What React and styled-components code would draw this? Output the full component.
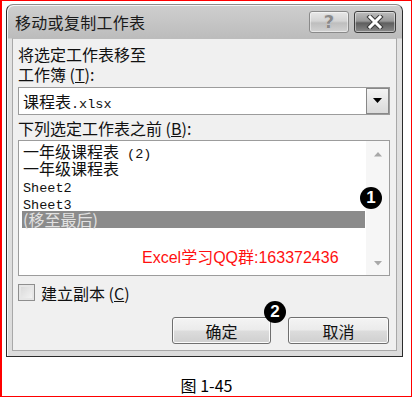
import React from 'react';
import styled, { createGlobalStyle } from 'styled-components';

const Global = createGlobalStyle`
  html, body {
    margin: 0;
    padding: 0;
    background: #fff;
  }
  * { box-sizing: border-box; }
`;

// page frame
const Page = styled.div`
  width: 412px;
  height: 397px;
  border: 1px solid #ff0000;
  border-left-width: 2px;
  padding: 3px 0 0 4px;
  display: flex;
  flex-direction: column;
  font-family: "Noto Sans CJK SC", "Liberation Sans", sans-serif;
`;

const Dialog = styled.div`
  width: 397px;
  display: flex;
  flex-direction: column;
  border: 1px solid #2b2b2b;
  border-top-color: #8c8c8c;
  border-radius: 7px 7px 0 0;
  background: linear-gradient(to bottom, #cfcfcf 0px, #bcbcbc 33px, #e2e2e2 34px, #dcdcdc 100%);
  box-shadow: inset 1px 1px 0 #f4f4f4;
`;

const TitleBar = styled.div`
  height: 33px;
  display: flex;
  align-items: center;
  padding: 0 6px 0 8px;
`;

const Title = styled.div`
  flex: 1;
  font-size: 16px;
  color: #1a1a1a;
  letter-spacing: 0.3px;
`;

const CaptionButton = styled.div`
  width: ${({ $w }) => $w}px;
  height: 22px;
  margin-left: 5px;
  border: 1px solid ${({ $dark }) => ($dark ? '#3e3e3e' : '#8a8a8a')};
  border-radius: 3px;
  display: flex;
  align-items: center;
  justify-content: center;
  background: ${({ $dark }) =>
    $dark
      ? 'linear-gradient(to bottom, #bdbdbd 0%, #9a9a9a 45%, #5e5e5e 55%, #8a8a8a 100%)'
      : 'linear-gradient(to bottom, #e8e8e8 0%, #d4d4d4 45%, #bebebe 55%, #d2d2d2 100%)'};
  box-shadow: inset 0 0 0 1px rgba(255, 255, 255, 0.45);
`;

const HelpGlyph = styled.span`
  font-family: "DejaVu Sans", sans-serif;
  font-weight: bold;
  font-size: 18px;
  line-height: 1;
  color: #8a8a8a;
  text-shadow: 0 0 1px #fff, 0 0 1px #fff, 0 0 1px #555;
`;

const Body = styled.div`
  margin: 0 5px 5px 5px;
  border: 1px solid #a8a8a8;
  border-top-color: #bcbcbc;
  background: #f0f0f0;
  padding: 5px 6px 6px 5px;
  display: flex;
  flex-direction: column;
  position: relative;
`;

const Label = styled.div`
  font-size: 16px;
  line-height: 20px;
  height: 20px;
  color: #111;
  margin-top: ${({ $mt }) => $mt || 0}px;
  white-space: nowrap;
`;

const Mono = styled.span`
  font-family: "Liberation Mono", monospace;
  font-size: 13.5px;
  white-space: pre;
`;

const Combo = styled.div`
  margin-top: 3px;
  height: 28px;
  border: 1px solid #9c9c9c;
  background: #fff;
  display: flex;
  align-items: stretch;
`;

const ComboText = styled.div`
  flex: 1;
  padding-left: 4px;
  font-size: 16px;
  line-height: 26px;
  color: #111;
`;

const DropButton = styled.div`
  width: 23px;
  border: 1px solid #888;
  background: linear-gradient(to bottom, #f4f4f4, #dadada);
  display: flex;
  align-items: center;
  justify-content: center;
`;

const List = styled.div`
  margin-top: 2px;
  height: 136px;
  border: 1px solid #9c9c9c;
  background: #fff;
  display: flex;
  position: relative;
`;

const Items = styled.div`
  flex: 1;
  padding: 2px 1px 0 3px;
`;

const Item = styled.div`
  height: 17px;
  line-height: 17px;
  font-size: 16px;
  padding-left: 1px;
  white-space: nowrap;
  color: ${({ $selected }) => ($selected ? '#e2e2e2' : '#111')};
  background: ${({ $selected }) => ($selected ? '#8b8b8b' : 'transparent')};
`;

const ScrollBar = styled.div`
  width: 23px;
  background: #f6f6f6;
  display: flex;
  flex-direction: column;
  justify-content: space-between;
  align-items: center;
  padding: 11px 0 9px;
`;

const Note = styled.div`
  position: absolute;
  left: 123px;
  top: 107px;
  font-family: "Liberation Sans", "Noto Sans CJK SC", sans-serif;
  font-size: 16px;
  line-height: 20px;
  color: #ff1010;
  white-space: nowrap;
`;

const Badge = styled.div`
  position: absolute;
  left: ${({ $x }) => $x}px;
  top: ${({ $y }) => $y}px;
  width: 22px;
  height: 22px;
  border-radius: 50%;
  background: #000;
  color: #fff;
  font-family: "Liberation Sans", sans-serif;
  font-weight: bold;
  font-size: 17px;
  line-height: 22px;
  text-align: center;
  z-index: 2;
`;

const CheckRow = styled.div`
  margin-top: 8px;
  height: 17px;
  display: flex;
  align-items: center;
  gap: 6px;
`;

const CheckBox = styled.div`
  width: 17px;
  height: 17px;
  border: 1px solid #8e8e8e;
  background: linear-gradient(135deg, #d6d6d6, #f6f6f6);
  box-shadow: inset 0 0 0 2px #e6e6e6;
`;

const ButtonRow = styled.div`
  margin-top: 16px;
  display: flex;
  justify-content: flex-end;
  gap: 17px;
  padding-right: 1px;
`;

const Button = styled.div`
  position: relative;
  width: ${({ $w }) => $w}px;
  height: 27px;
  border: 1px solid #6f6f6f;
  border-radius: 3px;
  background: linear-gradient(to bottom, #f4f4f4 0%, #ebebeb 48%, #dcdcdc 52%, #cfcfcf 100%);
  box-shadow: inset 0 0 0 1px #fbfbfb;
  display: flex;
  align-items: center;
  justify-content: center;
  font-size: 16px;
  color: #111;
`;

const Caption = styled.div`
  margin-top: 18px;
  text-align: center;
  font-size: 16px;
  line-height: 20px;
  color: #000;
  padding-right: 4px;
`;

const Triangle = ({ dir = 'down', color = '#000', w = 9 }) => (
  <svg width={w} height={w / 2 + 1} viewBox="0 0 10 6">
    {dir === 'down' ? (
      <polygon points="0,0 10,0 5,5.5" fill={color} />
    ) : (
      <polygon points="0,5.5 10,5.5 5,0" fill={color} />
    )}
  </svg>
);

const CloseX = () => (
  <svg width="18" height="14" viewBox="0 0 18 14">
    <path d="M4 2 L14 12 M14 2 L4 12" stroke="#3a3a3a" strokeWidth="5" strokeLinecap="square" />
    <path d="M4 2 L14 12 M14 2 L4 12" stroke="#fff" strokeWidth="3" strokeLinecap="square" />
  </svg>
);

const sheets = [
  { label: '一年级课程表', suffix: ' (2)' },
  { label: '一年级课程表' },
  { label: 'Sheet2', mono: true },
  { label: 'Sheet3', mono: true },
  { label: '(移至最后)', selected: true },
];

export default function App() {
  return (
    <>
      <Global />
      <Page>
        <Dialog>
          <TitleBar>
            <Title>移动或复制工作表</Title>
            <CaptionButton $w={40}>
              <HelpGlyph>?</HelpGlyph>
            </CaptionButton>
            <CaptionButton $w={42} $dark>
              <CloseX />
            </CaptionButton>
          </TitleBar>
          <Body>
            <Label>将选定工作表移至</Label>
            <Label>
              工作簿 (<u>T</u>):
            </Label>
            <Combo>
              <ComboText>
                课程表<Mono>.xlsx</Mono>
              </ComboText>
              <DropButton>
                <Triangle />
              </DropButton>
            </Combo>
            <Label $mt={3}>
              下列选定工作表之前 (<u>B</u>):
            </Label>
            <List>
              <Items>
                {sheets.map((s, i) => (
                  <Item key={i} $selected={s.selected}>
                    {s.mono ? <Mono>{s.label}</Mono> : s.label}
                    {s.suffix && <Mono>{s.suffix}</Mono>}
                  </Item>
                ))}
              </Items>
              <ScrollBar>
                <Triangle dir="up" color="#a8a8a8" w={8} />
                <Triangle color="#a8a8a8" w={8} />
              </ScrollBar>
              <Note>Excel学习QQ群:163372436</Note>
              <Badge $x={341} $y={46}>1</Badge>
            </List>
            <CheckRow>
              <CheckBox />
              <Label>
                建立副本 (<u>C</u>)
              </Label>
            </CheckRow>
            <ButtonRow>
              <Button $w={99}>
                确定
                <Badge $x={91} $y={-17}>2</Badge>
              </Button>
              <Button $w={101}>取消</Button>
            </ButtonRow>
          </Body>
        </Dialog>
        <Caption>图 1-45</Caption>
      </Page>
    </>
  );
}
